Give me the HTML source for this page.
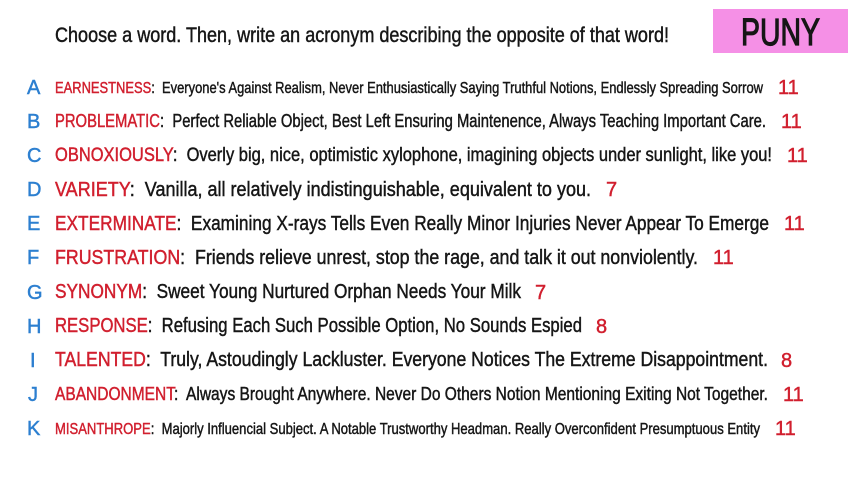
<!DOCTYPE html>
<html><head><meta charset="utf-8"><style>
html,body{margin:0;padding:0;background:#fff;width:853px;height:480px;overflow:hidden}
svg{display:block}
text{font-family:"Liberation Sans Narrow","Liberation Sans",sans-serif}
.r{fill:#d11f2e;stroke:#d11f2e}.b{fill:#2c7fd0;stroke:#2c7fd0}.k{fill:#161616;stroke:#161616}
text,tspan{stroke-width:0.45}
</style></head><body>
<svg width="853" height="480" viewBox="0 0 853 480" xmlns="http://www.w3.org/2000/svg">
<rect x="713" y="9" width="135" height="44" fill="#f590e6"/>
<text x="741" y="45" font-size="38" class="k" style="stroke-width:1.2" textLength="79" lengthAdjust="spacingAndGlyphs">PUNY</text>
<text x="55" y="42" font-size="21" class="k" textLength="614" lengthAdjust="spacingAndGlyphs">Choose a word. Then, write an acronym describing the opposite of that word!</text>

<g font-size="20">
<text x="27" y="94" class="b">A</text>
<text x="27" y="128" class="b">B</text>
<text x="27" y="162" class="b">C</text>
<text x="27" y="196" class="b">D</text>
<text x="27" y="230" class="b">E</text>
<text x="27" y="264" class="b">F</text>
<text x="27" y="299" class="b">G</text>
<text x="27" y="333" class="b">H</text>
<text x="30" y="367" class="b">I</text>
<text x="28" y="401" class="b">J</text>
<text x="27" y="435" class="b">K</text>
</g>

<text x="55" y="93" font-size="16" textLength="708" lengthAdjust="spacingAndGlyphs"><tspan class="r">EARNESTNESS</tspan><tspan class="k">:&#160; Everyone's Against Realism, Never Enthusiastically Saying Truthful Notions, Endlessly Spreading Sorrow</tspan></text>
<text x="55" y="127" font-size="18" textLength="711" lengthAdjust="spacingAndGlyphs"><tspan class="r">PROBLEMATIC</tspan><tspan class="k">:&#160; Perfect Reliable Object, Best Left Ensuring Maintenence, Always Teaching Important Care.</tspan></text>
<text x="55" y="161" font-size="19" textLength="717" lengthAdjust="spacingAndGlyphs"><tspan class="r">OBNOXIOUSLY</tspan><tspan class="k">:&#160; Overly big, nice, optimistic xylophone, imagining objects under sunlight, like you!</tspan></text>
<text x="55" y="196" font-size="20" textLength="536" lengthAdjust="spacingAndGlyphs"><tspan class="r">VARIETY</tspan><tspan class="k">:&#160; Vanilla, all relatively indistinguishable, equivalent to you.</tspan></text>
<text x="55" y="230" font-size="20" textLength="714" lengthAdjust="spacingAndGlyphs"><tspan class="r">EXTERMINATE</tspan><tspan class="k">:&#160; Examining X-rays Tells Even Really Minor Injuries Never Appear To Emerge</tspan></text>
<text x="55" y="264" font-size="20" textLength="643" lengthAdjust="spacingAndGlyphs"><tspan class="r">FRUSTRATION</tspan><tspan class="k">:&#160; Friends relieve unrest, stop the rage, and talk it out nonviolently.</tspan></text>
<text x="55" y="298" font-size="20" textLength="466" lengthAdjust="spacingAndGlyphs"><tspan class="r">SYNONYM</tspan><tspan class="k">:&#160; Sweet Young Nurtured Orphan Needs Your Milk</tspan></text>
<text x="55" y="332" font-size="20" textLength="527" lengthAdjust="spacingAndGlyphs"><tspan class="r">RESPONSE</tspan><tspan class="k">:&#160; Refusing Each Such Possible Option, No Sounds Espied</tspan></text>
<text x="55" y="366" font-size="20" textLength="713" lengthAdjust="spacingAndGlyphs"><tspan class="r">TALENTED</tspan><tspan class="k">:&#160; Truly, Astoudingly Lackluster. Everyone Notices The Extreme Disappointment.</tspan></text>
<text x="55" y="400" font-size="18" textLength="713" lengthAdjust="spacingAndGlyphs"><tspan class="r">ABANDONMENT</tspan><tspan class="k">:&#160; Always Brought Anywhere. Never Do Others Notion Mentioning Exiting Not Together.</tspan></text>
<text x="55" y="434" font-size="16" textLength="705" lengthAdjust="spacingAndGlyphs"><tspan class="r">MISANTHROPE</tspan><tspan class="k">:&#160; Majorly Influencial Subject. A Notable Trustworthy Headman. Really Overconfident Presumptuous Entity</tspan></text>

<g font-size="20" class="r">
<text x="778" y="94">11</text>
<text x="781" y="128">11</text>
<text x="787" y="162">11</text>
<text x="606" y="196">7</text>
<text x="784" y="230">11</text>
<text x="713" y="264">11</text>
<text x="535" y="299">7</text>
<text x="596" y="333">8</text>
<text x="781" y="367">8</text>
<text x="783" y="401">11</text>
<text x="775" y="435">11</text>
</g>
</svg>
</body></html>
